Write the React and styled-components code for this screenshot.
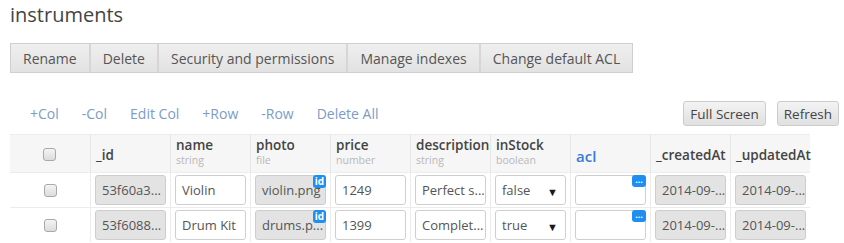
import React from "react";
import styled, { createGlobalStyle } from "styled-components";

const Global = createGlobalStyle`
  html, body { margin: 0; padding: 0; background: #fff; }
  body { font-family: "Open Sans", "Liberation Sans", sans-serif; color: #555; }
  * { box-sizing: border-box; }
`;

const Page = styled.div`
  width: 844px;
  height: 243px;
  overflow: hidden;
  padding: 0 10px;
`;

const Title = styled.h1`
  margin: 0;
  height: 43px;
  padding-top: 1px;
  font-size: 20px;
  font-weight: 400;
  color: #444;
  line-height: 28px;
`;

const Toolbar = styled.div`
  display: flex;
  height: 30px;
  width: max-content;
  border: 1px solid #cfcfcf;
  background: linear-gradient(#efefef, #e2e2e2);
`;

const ToolButton = styled.div`
  padding: 0 12px;
  display: flex;
  align-items: center;
  font-size: 14px;
  color: #555;
  border-left: ${(p) => (p.$first ? "none" : "2px solid #d6d6d6")};
`;

const ActionRow = styled.div`
  display: flex;
  align-items: center;
  justify-content: space-between;
  height: 33px;
  margin-top: 24px;
  margin-bottom: 4px;
  padding-left: 20px;
`;

const Links = styled.div`
  display: flex;
  gap: 23px;
`;

const LinkItem = styled.span`
  font-size: 14px;
  color: #7c9cc6;
`;

const RightButtons = styled.div`
  display: flex;
  gap: 11px;
  margin-right: -5px;
`;

const SmallButton = styled.div`
  height: 25px;
  padding: 0 6px;
  display: flex;
  align-items: center;
  font-size: 13.5px;
  color: #444;
  border: 1px solid #cccccc;
  border-radius: 3px;
  background: linear-gradient(#f3f3f3, #e0e0e0);
`;

const Table = styled.div`
  margin-top: 2px;
  width: 800px;
  display: grid;
  grid-template-columns: repeat(10, 80px);
  border-top: 1px solid #ececec;
`;

const HeadCell = styled.div`
  height: 37px;
  background: #f6f6f6;
  border-left: ${(p) => (p.$first ? "none" : "1px solid #e6e6e6")};
  padding: 2px 6px 0 5px;
  display: flex;
  flex-direction: column;
  justify-content: ${(p) => (p.$sub ? "flex-start" : "center")};
  align-items: ${(p) => (p.$center ? "center" : "flex-start")};
  white-space: nowrap;
`;

const HeadName = styled.div`
  font-size: 13.5px;
  line-height: 16px;
  font-weight: 600;
  color: ${(p) => (p.$blue ? "#3a7bd5" : "#444")};
  ${(p) => (p.$blue ? "font-size: 15px; padding-top: 2px;" : "")}
`;

const HeadType = styled.div`
  font-size: 10.5px;
  line-height: 14px;
  color: #b8b8b8;
`;

const Cell = styled.div`
  height: 35px;
  border-top: 1px solid #ececec;
  border-left: ${(p) => (p.$first ? "none" : "1px solid #ececec")};
  padding: 2px 4px 2px 4px;
  display: flex;
  align-items: center;
  justify-content: ${(p) => (p.$center ? "center" : "flex-start")};
`;

const Field = styled.div`
  position: relative;
  width: 71px;
  height: 30px;
  border: 1px solid ${(p) => (p.$disabled ? "#cdcdcd" : "#cfcfcf")};
  border-radius: 3px;
  background: ${(p) => (p.$disabled ? "#e3e3e3" : "#fff")};
  display: flex;
  align-items: center;
  padding: 0 6px;
  font-size: 13px;
  color: #555;
  white-space: nowrap;
`;

const FieldText = styled.span`
  flex-shrink: 0;
`;

const Arrow = styled.span`
  position: absolute;
  right: 7px;
  top: 8px;
  font-size: 11px;
  color: #1a1a1a;
`;

const Badge = styled.span`
  position: absolute;
  z-index: 1;
  top: -1px;
  right: -1px;
  width: ${(p) => (p.$wide ? "14px" : "13px")};
  height: ${(p) => (p.$wide ? "12px" : "13px")};
  border-radius: 3px;
  background: #1e8ff0;
  color: #fff;
  font-size: ${(p) => (p.$wide ? "9px" : "10px")};
  font-weight: 700;
  line-height: ${(p) => (p.$wide ? "9px" : "12px")};
  text-align: center;
`;

const Check = styled.span`
  width: 13px;
  height: 13px;
  border: 1px solid #a9a9a9;
  border-radius: 3px;
  background: linear-gradient(#f4f4f4, #dcdcdc);
  display: inline-block;
`;

const headers = [
  { name: "_id" },
  { name: "name", type: "string" },
  { name: "photo", type: "file" },
  { name: "price", type: "number" },
  { name: "description", type: "string" },
  { name: "inStock", type: "boolean" },
  { name: "acl", blue: true },
  { name: "_createdAt" },
  { name: "_updatedAt" },
];

const rows = [
  ["53f60a3...", "Violin", "violin.png", "1249", "Perfect s...", "false"],
  ["53f6088...", "Drum Kit", "drums.p...", "1399", "Complet...", "true"],
];

export default function App() {
  return (
    <Page>
      <Global />
      <Title>instruments</Title>
      <Toolbar>
        {["Rename", "Delete", "Security and permissions", "Manage indexes", "Change default ACL"].map((t, i) => (
          <ToolButton key={t} $first={i === 0}>{t}</ToolButton>
        ))}
      </Toolbar>
      <ActionRow>
        <Links>
          {["+Col", "-Col", "Edit Col", "+Row", "-Row", "Delete All"].map((t) => (
            <LinkItem key={t}>{t}</LinkItem>
          ))}
        </Links>
        <RightButtons>
          <SmallButton>Full Screen</SmallButton>
          <SmallButton>Refresh</SmallButton>
        </RightButtons>
      </ActionRow>
      <Table>
        <HeadCell $first $center>
          <Check />
        </HeadCell>
        {headers.map((h) => (
          <HeadCell key={h.name} $sub={!!h.type}>
            <HeadName $blue={h.blue}>{h.name}</HeadName>
            {h.type && <HeadType>{h.type}</HeadType>}
          </HeadCell>
        ))}
        {rows.map((r) => (
          <React.Fragment key={r[0]}>
            <Cell $first $center>
              <Check />
            </Cell>
            <Cell><Field $disabled><FieldText>{r[0]}</FieldText></Field></Cell>
            <Cell><Field><FieldText>{r[1]}</FieldText></Field></Cell>
            <Cell><Field $disabled><FieldText>{r[2]}</FieldText><Badge>id</Badge></Field></Cell>
            <Cell><Field><FieldText>{r[3]}</FieldText></Field></Cell>
            <Cell><Field><FieldText>{r[4]}</FieldText></Field></Cell>
            <Cell><Field><FieldText>{r[5]}</FieldText><Arrow>▼</Arrow></Field></Cell>
            <Cell><Field><Badge $wide>...</Badge></Field></Cell>
            <Cell><Field $disabled><FieldText>2014-09-...</FieldText></Field></Cell>
            <Cell><Field $disabled><FieldText>2014-09-...</FieldText></Field></Cell>
          </React.Fragment>
        ))}
      </Table>
    </Page>
  );
}
